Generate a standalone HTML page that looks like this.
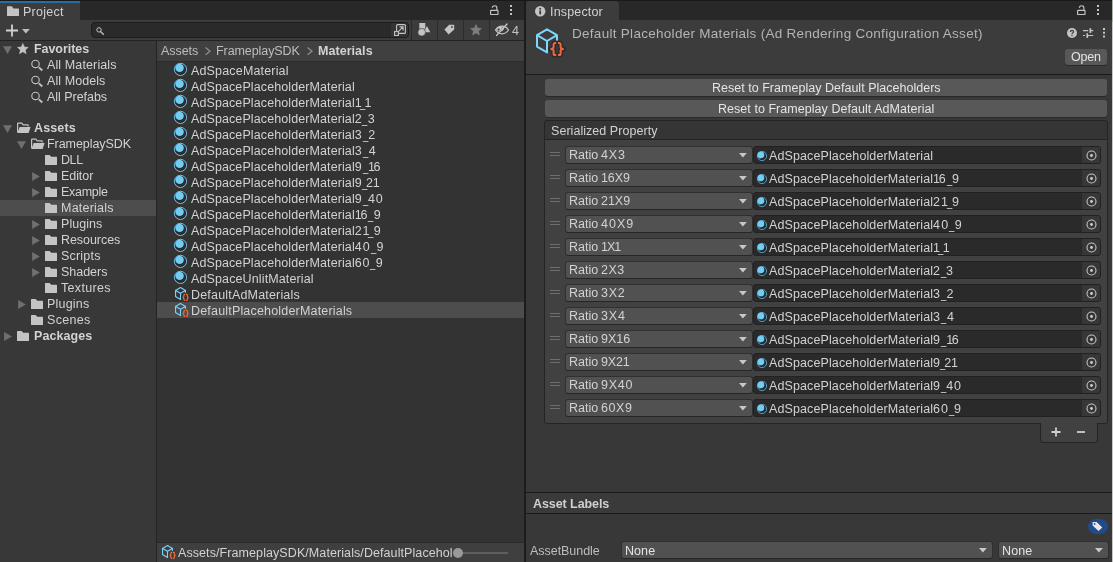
<!DOCTYPE html>
<html><head><meta charset="utf-8"><title>Unity</title>
<style>
*{box-sizing:border-box;margin:0;padding:0}
html,body{width:1113px;height:562px;overflow:hidden;background:#383838}
body{font-family:"Liberation Sans",sans-serif;font-size:12.5px;color:#d2d2d2;position:relative;line-height:16px;letter-spacing:0.06px}
.a{position:absolute}
.t{position:absolute;white-space:pre;height:16px;line-height:16px;will-change:transform}
.b{font-weight:bold}
svg{position:absolute;overflow:visible}
.sel{background:#4d4d4d;height:16px}
.btn{will-change:transform;background:#585858;border-radius:3px;color:#e4e4e4;text-align:center;box-shadow:0 1px 0 #2a2a2a}
.dd{background:#515151;border:1px solid #303030;border-bottom-color:#262626;border-radius:3px;height:18px}
.of{background:#2a2a2a;border:1px solid #212121;border-radius:3px;height:18px}
</style></head><body>
<div class="a" style="left:0px;top:0px;width:524px;height:20px;background:#282828;border-top-right-radius:3px"></div>
<div class="a" style="left:526px;top:0px;width:586px;height:20px;background:#282828;border-top-right-radius:3px"></div>
<div class="a" style="left:0px;top:1px;width:80px;height:19px;background:#3c3c3c;border-top:2px solid #2d6aa3"></div>
<div class="a" style="left:526px;top:1px;width:93px;height:19px;background:#3c3c3c;border-radius:3px 3px 0 0"></div>
<div class="a" style="left:0px;top:20px;width:524px;height:21px;background:#3c3c3c;border-bottom:1px solid #232323"></div>
<div class="a" style="left:0px;top:41px;width:156px;height:521px;background:#383838;"></div>
<div class="a" style="left:156px;top:41px;width:1px;height:521px;background:#232323;"></div>
<div class="a" style="left:157px;top:41px;width:367px;height:21px;background:#404040;border-bottom:1px solid #2e2e2e"></div>
<div class="a" style="left:157px;top:62px;width:367px;height:480px;background:#333333;"></div>
<div class="a" style="left:157px;top:542px;width:367px;height:20px;background:#3f3f3f;border-top:1px solid #2a2a2a"></div>
<div class="a" style="left:524px;top:0px;width:2px;height:562px;background:#1c1c1c;"></div>
<div class="a" style="left:0px;top:0px;width:1113px;height:1px;background:#191919;"></div>
<div class="a" style="left:526px;top:20px;width:586px;height:55px;background:#3c3c3c;border-bottom:1px solid #1a1a1a"></div>
<div class="a" style="left:526px;top:75px;width:586px;height:487px;background:#383838;"></div>
<svg style="left:7px;top:6px" width="13" height="11"><path d="M0 0.8 Q0 0.2 0.6 0.2 H4.8 L6.4 2.4 H11.4 Q12 2.4 12 3 V9.4 Q12 10 11.4 10 H0.6 Q0 10 0 9.4 Z" fill="#c4c4c4"/></svg>
<div class="t" style="left:23.05px;top:4px;;letter-spacing:0.249px">Project</div>
<svg style="left:490px;top:5px" width="9" height="11"><rect x="0.6" y="5.3" width="7.4" height="4.2" rx="0.6" fill="none" stroke="#c4c4c4" stroke-width="1.15"/><path d="M6.9 5.2 V3 Q6.9 0.7 4.6 0.7 Q2.4 0.7 2.3 2.8" fill="none" stroke="#c4c4c4" stroke-width="1.15"/></svg>
<svg style="left:510px;top:5px" width="2" height="12"><rect x="0" y="0" width="2" height="2" fill="#c4c4c4"/><rect x="0" y="4" width="2" height="2" fill="#c4c4c4"/><rect x="0" y="8" width="2" height="2" fill="#c4c4c4"/></svg>
<svg style="left:534.8px;top:5.9px" width="11" height="11"><circle cx="5.2" cy="5.2" r="5.2" fill="#c4c4c4"/><rect x="4.3" y="4.4" width="1.8" height="4" fill="#3c3c3c"/><rect x="4.3" y="1.9" width="1.8" height="1.7" fill="#3c3c3c"/></svg>
<div class="t" style="left:549.75px;top:3.7px;;letter-spacing:0.16px">Inspector</div>
<svg style="left:1077px;top:5px" width="9" height="11"><rect x="0.6" y="5.3" width="7.4" height="4.2" rx="0.6" fill="none" stroke="#c4c4c4" stroke-width="1.15"/><path d="M6.9 5.2 V3 Q6.9 0.7 4.6 0.7 Q2.4 0.7 2.3 2.8" fill="none" stroke="#c4c4c4" stroke-width="1.15"/></svg>
<svg style="left:1097px;top:5px" width="2" height="12"><rect x="0" y="0" width="2" height="2" fill="#c4c4c4"/><rect x="0" y="4" width="2" height="2" fill="#c4c4c4"/><rect x="0" y="8" width="2" height="2" fill="#c4c4c4"/></svg>
<svg style="left:6px;top:24px" width="13" height="13"><path d="M6 0.5 V12.5 M0 6.5 H12" stroke="#d0d0d0" stroke-width="1.8" fill="none"/></svg>
<svg style="left:22px;top:28.5px" width="8" height="5"><path d="M0 0 H7.8 L3.9 4.5 Z" fill="#bdbdbd"/></svg>
<div class="a" style="left:91.3px;top:22px;width:317.7px;height:16px;background:#2a2a2a;border:1px solid #1c1c1c;border-radius:4px"></div>
<div class="a" style="left:391px;top:23px;width:17px;height:14px;background:#343434;border-radius:0 3px 3px 0"></div>
<svg style="left:95.5px;top:26.5px" width="10" height="10"><circle cx="3" cy="2.9" r="2.2" fill="none" stroke="#c4c4c4" stroke-width="1"/><path d="M4.7 4.7 L7.4 7.3" stroke="#c4c4c4" stroke-width="1.25" stroke-linecap="round"/></svg>
<svg style="left:394px;top:24px" width="12" height="12"><rect x="2.6" y="0.6" width="8.8" height="8.8" rx="1" fill="none" stroke="#c4c4c4" stroke-width="1.1"/><rect x="0.6" y="7.6" width="3.8" height="3.8" fill="#343434" stroke="#c4c4c4" stroke-width="1.1"/><path d="M4.6 7.4 L8.8 3.2 M5.6 2.9 H9.1 V6.4" fill="none" stroke="#c4c4c4" stroke-width="1.1"/></svg>
<div class="a" style="left:411px;top:20px;width:1px;height:20px;background:#2b2b2b;"></div>
<div class="a" style="left:437px;top:20px;width:1px;height:20px;background:#2b2b2b;"></div>
<div class="a" style="left:463px;top:20px;width:1px;height:20px;background:#2b2b2b;"></div>
<div class="a" style="left:489px;top:20px;width:1px;height:20px;background:#2b2b2b;"></div>
<svg style="left:418px;top:23px" width="13" height="14"><rect x="1.3" y="0" width="6" height="5.8" fill="#c4c4c4"/><path d="M9 3 L12.3 9.3 H5.7 Z" fill="#c4c4c4"/><circle cx="3.7" cy="9.3" r="3.8" fill="#c4c4c4" stroke="#3c3c3c" stroke-width="0.6"/></svg>
<svg style="left:444px;top:24px" width="11" height="11"><path d="M5.2 0.8 H9.6 Q10.2 0.8 10.2 1.4 V5.6 L4.6 10.6 L0.4 5.6 Z" fill="#c4c4c4"/><circle cx="8" cy="3" r="0.9" fill="#3c3c3c"/></svg>
<svg style="left:470px;top:24px" width="11.96" height="11.96" viewBox="0 0 13 13"><path d="M6.50 0.50 L8.20 4.45 L12.49 4.85 L9.26 7.70 L10.20 11.90 L6.50 9.70 L2.80 11.90 L3.74 7.70 L0.51 4.85 L4.80 4.45 Z" fill="#7e7e7e" stroke="#7e7e7e" stroke-width="0.6" stroke-linejoin="round"/></svg>
<svg style="left:494px;top:23px" width="16" height="14"><path d="M1.5 7 Q4 3.2 8 3.2 Q12 3.2 14.5 7 Q12 10.8 8 10.8 Q4 10.8 1.5 7 Z" fill="none" stroke="#c4c4c4" stroke-width="1.3"/><path d="M2 7 Q4.2 3.6 8 3.6 L9.2 3.8 L5.2 8.6 Q3.2 8.4 2 7 Z" fill="#c4c4c4"/><circle cx="4.6" cy="6.6" r="1.1" fill="#3c3c3c"/><path d="M9.8 5.4 L7.4 8.2" stroke="#c4c4c4" stroke-width="1.3"/><path d="M2.6 12.4 L13 1" stroke="#c4c4c4" stroke-width="1.4" stroke-linecap="round"/></svg>
<div class="t" style="left:511.7px;top:22.5px;color:#c4c4c4">4</div>
<svg style="left:0px;top:41px" width="16" height="16"><path d="M3 5.2 H12 L7.5 13 Z" fill="#6f6f6f"/></svg>
<svg style="left:17.2px;top:43.4px" width="11.700000000000001" height="11.700000000000001" viewBox="0 0 13 13"><path d="M6.50 0.50 L8.20 4.45 L12.49 4.85 L9.26 7.70 L10.20 11.90 L6.50 9.70 L2.80 11.90 L3.74 7.70 L0.51 4.85 L4.80 4.45 Z" fill="#c4c4c4" stroke="#c4c4c4" stroke-width="0.6" stroke-linejoin="round"/></svg>
<div class="t b" style="left:33.75px;top:41px;;letter-spacing:-0.062px">Favorites</div>
<svg style="left:30px;top:58px" width="16" height="16"><circle cx="5.5" cy="5.9" r="3.7" fill="none" stroke="#c4c4c4" stroke-width="1.1"/><path d="M8.9 9.4 L12.3 12.5" stroke="#c4c4c4" stroke-width="1.9"/></svg>
<div class="t" style="left:47.35px;top:57px;;letter-spacing:0.118px">All Materials</div>
<svg style="left:30px;top:74px" width="16" height="16"><circle cx="5.5" cy="5.9" r="3.7" fill="none" stroke="#c4c4c4" stroke-width="1.1"/><path d="M8.9 9.4 L12.3 12.5" stroke="#c4c4c4" stroke-width="1.9"/></svg>
<div class="t" style="left:47.35px;top:73px;;letter-spacing:0.07px">All Models</div>
<svg style="left:30px;top:90px" width="16" height="16"><circle cx="5.5" cy="5.9" r="3.7" fill="none" stroke="#c4c4c4" stroke-width="1.1"/><path d="M8.9 9.4 L12.3 12.5" stroke="#c4c4c4" stroke-width="1.9"/></svg>
<div class="t" style="left:47.35px;top:89px;;letter-spacing:-0.035px">All Prefabs</div>
<svg style="left:0px;top:120px" width="16" height="16"><path d="M3 5.2 H12 L7.5 13 Z" fill="#6f6f6f"/></svg>
<svg style="left:17px;top:120px" width="16" height="16"><path d="M0.6 12.3 V3.8 Q0.6 3.2 1.2 3.2 H4.8 L6.2 4.8 H10.6 Q11.2 4.8 11.2 5.4 V6.6" fill="none" stroke="#c4c4c4" stroke-width="1.2"/><path d="M2.7 7 H13.6 L11.6 13 H0.3 Z" fill="#c4c4c4"/></svg>
<div class="t b" style="left:34.25px;top:120px;;letter-spacing:0.14px">Assets</div>
<svg style="left:14px;top:136px" width="16" height="16"><path d="M3 5.2 H12 L7.5 13 Z" fill="#6f6f6f"/></svg>
<svg style="left:31px;top:136px" width="16" height="16"><path d="M0.6 12.3 V3.8 Q0.6 3.2 1.2 3.2 H4.8 L6.2 4.8 H10.6 Q11.2 4.8 11.2 5.4 V6.6" fill="none" stroke="#c4c4c4" stroke-width="1.2"/><path d="M2.7 7 H13.6 L11.6 13 H0.3 Z" fill="#c4c4c4"/></svg>
<div class="t" style="left:46.85px;top:136px;;letter-spacing:-0.059px">FrameplaySDK</div>
<svg style="left:45px;top:152px" width="16" height="16"><path d="M0 3.6 Q0 3 0.6 3 H4.6 L6.2 4.8 H11.4 Q12 4.8 12 5.4 V12.4 Q12 13 11.4 13 H0.6 Q0 13 0 12.4 Z" fill="#c4c4c4"/></svg>
<div class="t" style="left:60.95px;top:152px;;letter-spacing:-0.419px">DLL</div>
<svg style="left:28px;top:168px" width="16" height="16"><path d="M4.1 4.1 L11.9 8.6 L4.1 13.1 Z" fill="#6f6f6f"/></svg>
<svg style="left:45px;top:168px" width="16" height="16"><path d="M0 3.6 Q0 3 0.6 3 H4.6 L6.2 4.8 H11.4 Q12 4.8 12 5.4 V12.4 Q12 13 11.4 13 H0.6 Q0 13 0 12.4 Z" fill="#c4c4c4"/></svg>
<div class="t" style="left:60.95px;top:168px;;letter-spacing:-0.071px">Editor</div>
<svg style="left:28px;top:184px" width="16" height="16"><path d="M4.1 4.1 L11.9 8.6 L4.1 13.1 Z" fill="#6f6f6f"/></svg>
<svg style="left:45px;top:184px" width="16" height="16"><path d="M0 3.6 Q0 3 0.6 3 H4.6 L6.2 4.8 H11.4 Q12 4.8 12 5.4 V12.4 Q12 13 11.4 13 H0.6 Q0 13 0 12.4 Z" fill="#c4c4c4"/></svg>
<div class="t" style="left:60.95px;top:184px;;letter-spacing:-0.273px">Example</div>
<div class="a" style="left:0px;top:200px;width:156px;height:16px;background:#4d4d4d;"></div>
<svg style="left:45px;top:200px" width="16" height="16"><path d="M0 3.6 Q0 3 0.6 3 H4.6 L6.2 4.8 H11.4 Q12 4.8 12 5.4 V12.4 Q12 13 11.4 13 H0.6 Q0 13 0 12.4 Z" fill="#c4c4c4"/></svg>
<div class="t" style="left:60.95px;top:200px;;letter-spacing:0.223px">Materials</div>
<svg style="left:28px;top:216px" width="16" height="16"><path d="M4.1 4.1 L11.9 8.6 L4.1 13.1 Z" fill="#6f6f6f"/></svg>
<svg style="left:45px;top:216px" width="16" height="16"><path d="M0 3.6 Q0 3 0.6 3 H4.6 L6.2 4.8 H11.4 Q12 4.8 12 5.4 V12.4 Q12 13 11.4 13 H0.6 Q0 13 0 12.4 Z" fill="#c4c4c4"/></svg>
<div class="t" style="left:60.95px;top:216px;;letter-spacing:0.05px">Plugins</div>
<svg style="left:28px;top:232px" width="16" height="16"><path d="M4.1 4.1 L11.9 8.6 L4.1 13.1 Z" fill="#6f6f6f"/></svg>
<svg style="left:45px;top:232px" width="16" height="16"><path d="M0 3.6 Q0 3 0.6 3 H4.6 L6.2 4.8 H11.4 Q12 4.8 12 5.4 V12.4 Q12 13 11.4 13 H0.6 Q0 13 0 12.4 Z" fill="#c4c4c4"/></svg>
<div class="t" style="left:60.95px;top:232px;;letter-spacing:-0.056px">Resources</div>
<svg style="left:28px;top:248px" width="16" height="16"><path d="M4.1 4.1 L11.9 8.6 L4.1 13.1 Z" fill="#6f6f6f"/></svg>
<svg style="left:45px;top:248px" width="16" height="16"><path d="M0 3.6 Q0 3 0.6 3 H4.6 L6.2 4.8 H11.4 Q12 4.8 12 5.4 V12.4 Q12 13 11.4 13 H0.6 Q0 13 0 12.4 Z" fill="#c4c4c4"/></svg>
<div class="t" style="left:60.95px;top:248px;;letter-spacing:0.199px">Scripts</div>
<svg style="left:28px;top:264px" width="16" height="16"><path d="M4.1 4.1 L11.9 8.6 L4.1 13.1 Z" fill="#6f6f6f"/></svg>
<svg style="left:45px;top:264px" width="16" height="16"><path d="M0 3.6 Q0 3 0.6 3 H4.6 L6.2 4.8 H11.4 Q12 4.8 12 5.4 V12.4 Q12 13 11.4 13 H0.6 Q0 13 0 12.4 Z" fill="#c4c4c4"/></svg>
<div class="t" style="left:60.95px;top:264px;;letter-spacing:-0.027px">Shaders</div>
<svg style="left:45px;top:280px" width="16" height="16"><path d="M0 3.6 Q0 3 0.6 3 H4.6 L6.2 4.8 H11.4 Q12 4.8 12 5.4 V12.4 Q12 13 11.4 13 H0.6 Q0 13 0 12.4 Z" fill="#c4c4c4"/></svg>
<div class="t" style="left:60.95px;top:280px;;letter-spacing:0.321px">Textures</div>
<svg style="left:14px;top:296px" width="16" height="16"><path d="M4.1 4.1 L11.9 8.6 L4.1 13.1 Z" fill="#6f6f6f"/></svg>
<svg style="left:31px;top:296px" width="16" height="16"><path d="M0 3.6 Q0 3 0.6 3 H4.6 L6.2 4.8 H11.4 Q12 4.8 12 5.4 V12.4 Q12 13 11.4 13 H0.6 Q0 13 0 12.4 Z" fill="#c4c4c4"/></svg>
<div class="t" style="left:46.65px;top:296px;;letter-spacing:0.2px">Plugins</div>
<svg style="left:31px;top:312px" width="16" height="16"><path d="M0 3.6 Q0 3 0.6 3 H4.6 L6.2 4.8 H11.4 Q12 4.8 12 5.4 V12.4 Q12 13 11.4 13 H0.6 Q0 13 0 12.4 Z" fill="#c4c4c4"/></svg>
<div class="t" style="left:46.65px;top:312px;;letter-spacing:0.299px">Scenes</div>
<svg style="left:0px;top:328px" width="16" height="16"><path d="M4.1 4.1 L11.9 8.6 L4.1 13.1 Z" fill="#6f6f6f"/></svg>
<svg style="left:17px;top:328px" width="16" height="16"><path d="M0 3.6 Q0 3 0.6 3 H4.6 L6.2 4.8 H11.4 Q12 4.8 12 5.4 V12.4 Q12 13 11.4 13 H0.6 Q0 13 0 12.4 Z" fill="#c4c4c4"/></svg>
<div class="t b" style="left:33.75px;top:328px;;letter-spacing:0.059px">Packages</div>
<div class="t" style="left:161.15px;top:42.9px;color:#bdbdbd;letter-spacing:-0.063px">Assets</div>
<svg style="left:205.2px;top:47.3px" width="7" height="9"><path d="M0.6 0.5 L5 4.15 L0.6 7.8" fill="none" stroke="#8c8c8c" stroke-width="1.3"/></svg>
<div class="t" style="left:215.65px;top:42.9px;color:#bdbdbd;letter-spacing:-0.077px">FrameplaySDK</div>
<svg style="left:306.9px;top:47.3px" width="7" height="9"><path d="M0.6 0.5 L5 4.15 L0.6 7.8" fill="none" stroke="#8c8c8c" stroke-width="1.3"/></svg>
<div class="t b" style="left:317.95px;top:42.9px;;letter-spacing:0.05px">Materials</div>
<svg style="left:173px;top:62px" width="16.0" height="16.0" viewBox="0 0 16 16"><circle cx="7.5" cy="7.4" r="6.1" fill="#2b2b2b" stroke="#6fcdf8" stroke-width="0.95"/><circle cx="6.6" cy="5.9" r="4.2" fill="#6fcdf8"/></svg>
<div class="t" style="left:191.35px;top:62.8px;;letter-spacing:0.164px">AdSpaceMaterial</div>
<svg style="left:173px;top:78px" width="16.0" height="16.0" viewBox="0 0 16 16"><circle cx="7.5" cy="7.4" r="6.1" fill="#2b2b2b" stroke="#6fcdf8" stroke-width="0.95"/><circle cx="6.6" cy="5.9" r="4.2" fill="#6fcdf8"/></svg>
<div class="t" style="left:191.35px;top:78.8px;letter-spacing:0.099px">AdSpacePlaceholderMaterial</div>
<svg style="left:173px;top:94px" width="16.0" height="16.0" viewBox="0 0 16 16"><circle cx="7.5" cy="7.4" r="6.1" fill="#2b2b2b" stroke="#6fcdf8" stroke-width="0.95"/><circle cx="6.6" cy="5.9" r="4.2" fill="#6fcdf8"/></svg>
<div class="t" style="left:191.35px;top:94.8px;letter-spacing:0.099px">AdSpacePlaceholderMaterial<span style="letter-spacing:-1.97px">1</span><span style="display:inline-block;width:4.73px;transform:scaleX(0.76);transform-origin:0 50%;letter-spacing:0">_</span><span style="letter-spacing:-1.97px">1</span></div>
<svg style="left:173px;top:110px" width="16.0" height="16.0" viewBox="0 0 16 16"><circle cx="7.5" cy="7.4" r="6.1" fill="#2b2b2b" stroke="#6fcdf8" stroke-width="0.95"/><circle cx="6.6" cy="5.9" r="4.2" fill="#6fcdf8"/></svg>
<div class="t" style="left:191.35px;top:110.8px;letter-spacing:0.099px">AdSpacePlaceholderMaterial<span style="letter-spacing:0.75px">2</span><span style="display:inline-block;width:5.30px;transform:scaleX(0.76);transform-origin:0 50%;letter-spacing:0">_</span><span style="letter-spacing:0.75px">3</span></div>
<svg style="left:173px;top:126px" width="16.0" height="16.0" viewBox="0 0 16 16"><circle cx="7.5" cy="7.4" r="6.1" fill="#2b2b2b" stroke="#6fcdf8" stroke-width="0.95"/><circle cx="6.6" cy="5.9" r="4.2" fill="#6fcdf8"/></svg>
<div class="t" style="left:191.35px;top:126.8px;letter-spacing:0.099px">AdSpacePlaceholderMaterial<span style="letter-spacing:0.92px">3</span><span style="display:inline-block;width:5.47px;transform:scaleX(0.76);transform-origin:0 50%;letter-spacing:0">_</span><span style="letter-spacing:0.92px">2</span></div>
<svg style="left:173px;top:142px" width="16.0" height="16.0" viewBox="0 0 16 16"><circle cx="7.5" cy="7.4" r="6.1" fill="#2b2b2b" stroke="#6fcdf8" stroke-width="0.95"/><circle cx="6.6" cy="5.9" r="4.2" fill="#6fcdf8"/></svg>
<div class="t" style="left:191.35px;top:142.8px;letter-spacing:0.099px">AdSpacePlaceholderMaterial<span style="letter-spacing:1.18px">3</span><span style="display:inline-block;width:5.73px;transform:scaleX(0.76);transform-origin:0 50%;letter-spacing:0">_</span><span style="letter-spacing:1.18px">4</span></div>
<svg style="left:173px;top:158px" width="16.0" height="16.0" viewBox="0 0 16 16"><circle cx="7.5" cy="7.4" r="6.1" fill="#2b2b2b" stroke="#6fcdf8" stroke-width="0.95"/><circle cx="6.6" cy="5.9" r="4.2" fill="#6fcdf8"/></svg>
<div class="t" style="left:191.35px;top:158.8px;letter-spacing:0.099px">AdSpacePlaceholderMaterial<span style="letter-spacing:0.80px">9</span><span style="display:inline-block;width:5.35px;transform:scaleX(0.76);transform-origin:0 50%;letter-spacing:0">_</span><span style="letter-spacing:-1.35px">1</span><span style="letter-spacing:0.80px">6</span></div>
<svg style="left:173px;top:174px" width="16.0" height="16.0" viewBox="0 0 16 16"><circle cx="7.5" cy="7.4" r="6.1" fill="#2b2b2b" stroke="#6fcdf8" stroke-width="0.95"/><circle cx="6.6" cy="5.9" r="4.2" fill="#6fcdf8"/></svg>
<div class="t" style="left:191.35px;top:174.8px;letter-spacing:0.099px">AdSpacePlaceholderMaterial<span style="letter-spacing:-0.15px">9</span><span style="display:inline-block;width:4.40px;transform:scaleX(0.76);transform-origin:0 50%;letter-spacing:0">_</span><span style="letter-spacing:-0.15px">2</span><span style="letter-spacing:-2.30px">1</span></div>
<svg style="left:173px;top:190px" width="16.0" height="16.0" viewBox="0 0 16 16"><circle cx="7.5" cy="7.4" r="6.1" fill="#2b2b2b" stroke="#6fcdf8" stroke-width="0.95"/><circle cx="6.6" cy="5.9" r="4.2" fill="#6fcdf8"/></svg>
<div class="t" style="left:191.35px;top:190.8px;letter-spacing:0.099px">AdSpacePlaceholderMaterial<span style="letter-spacing:0.85px">9</span><span style="display:inline-block;width:5.40px;transform:scaleX(0.76);transform-origin:0 50%;letter-spacing:0">_</span><span style="letter-spacing:0.85px">4</span><span style="letter-spacing:0.85px">0</span></div>
<svg style="left:173px;top:206px" width="16.0" height="16.0" viewBox="0 0 16 16"><circle cx="7.5" cy="7.4" r="6.1" fill="#2b2b2b" stroke="#6fcdf8" stroke-width="0.95"/><circle cx="6.6" cy="5.9" r="4.2" fill="#6fcdf8"/></svg>
<div class="t" style="left:191.35px;top:206.8px;letter-spacing:0.099px">AdSpacePlaceholderMaterial<span style="letter-spacing:-1.28px">1</span><span style="letter-spacing:0.87px">6</span><span style="display:inline-block;width:5.42px;transform:scaleX(0.76);transform-origin:0 50%;letter-spacing:0">_</span><span style="letter-spacing:0.87px">9</span></div>
<svg style="left:173px;top:222px" width="16.0" height="16.0" viewBox="0 0 16 16"><circle cx="7.5" cy="7.4" r="6.1" fill="#2b2b2b" stroke="#6fcdf8" stroke-width="0.95"/><circle cx="6.6" cy="5.9" r="4.2" fill="#6fcdf8"/></svg>
<div class="t" style="left:191.35px;top:222.8px;letter-spacing:0.099px">AdSpacePlaceholderMaterial<span style="letter-spacing:0.87px">2</span><span style="letter-spacing:-1.28px">1</span><span style="display:inline-block;width:5.42px;transform:scaleX(0.76);transform-origin:0 50%;letter-spacing:0">_</span><span style="letter-spacing:0.87px">9</span></div>
<svg style="left:173px;top:238px" width="16.0" height="16.0" viewBox="0 0 16 16"><circle cx="7.5" cy="7.4" r="6.1" fill="#2b2b2b" stroke="#6fcdf8" stroke-width="0.95"/><circle cx="6.6" cy="5.9" r="4.2" fill="#6fcdf8"/></svg>
<div class="t" style="left:191.35px;top:238.8px;letter-spacing:0.099px">AdSpacePlaceholderMaterial<span style="letter-spacing:1.07px">4</span><span style="letter-spacing:1.07px">0</span><span style="display:inline-block;width:5.62px;transform:scaleX(0.76);transform-origin:0 50%;letter-spacing:0">_</span><span style="letter-spacing:1.07px">9</span></div>
<svg style="left:173px;top:254px" width="16.0" height="16.0" viewBox="0 0 16 16"><circle cx="7.5" cy="7.4" r="6.1" fill="#2b2b2b" stroke="#6fcdf8" stroke-width="0.95"/><circle cx="6.6" cy="5.9" r="4.2" fill="#6fcdf8"/></svg>
<div class="t" style="left:191.35px;top:254.8px;letter-spacing:0.099px">AdSpacePlaceholderMaterial<span style="letter-spacing:0.85px">6</span><span style="letter-spacing:0.85px">0</span><span style="display:inline-block;width:5.40px;transform:scaleX(0.76);transform-origin:0 50%;letter-spacing:0">_</span><span style="letter-spacing:0.85px">9</span></div>
<svg style="left:173px;top:270px" width="16.0" height="16.0" viewBox="0 0 16 16"><circle cx="7.5" cy="7.4" r="6.1" fill="#2b2b2b" stroke="#6fcdf8" stroke-width="0.95"/><circle cx="6.6" cy="5.9" r="4.2" fill="#6fcdf8"/></svg>
<div class="t" style="left:191.35px;top:270.8px;;letter-spacing:0.126px">AdSpaceUnlitMaterial</div>
<svg style="left:173px;top:286px" width="17" height="16" viewBox="0 0 17 16"><path d="M7.5 1.55 L2.55 4.4 V10.6 L7.5 13.45 V7.27 L2.55 4.4 M7.5 7.27 L12.45 4.4 L7.5 1.55 M12.45 4.4 V7.6" fill="none" stroke="#79d3fb" stroke-width="1.1" stroke-linejoin="round" stroke-linecap="round"/><path d="M12.3 8.35 H11.8 Q10.9 8.35 10.9 9.2 V10.4 Q10.9 11.4 9.6 11.4 Q10.9 11.4 10.9 12.4 V13.6 Q10.9 14.45 11.8 14.45 H12.3 M13 8.35 H13.5 Q14.4 8.35 14.4 9.2 V10.4 Q14.4 11.4 15.7 11.4 Q14.4 11.4 14.4 12.4 V13.6 Q14.4 14.45 13.5 14.45 H13" fill="none" stroke="#333333" stroke-width="3" stroke-linejoin="round" stroke-linecap="round"/><path d="M12.3 8.35 H11.8 Q10.9 8.35 10.9 9.2 V10.4 Q10.9 11.4 9.6 11.4 Q10.9 11.4 10.9 12.4 V13.6 Q10.9 14.45 11.8 14.45 H12.3 M13 8.35 H13.5 Q14.4 8.35 14.4 9.2 V10.4 Q14.4 11.4 15.7 11.4 Q14.4 11.4 14.4 12.4 V13.6 Q14.4 14.45 13.5 14.45 H13" fill="none" stroke="#f2683c" stroke-width="1.2"/></svg>
<div class="t" style="left:190.65px;top:286.8px;;letter-spacing:0.182px">DefaultAdMaterials</div>
<div class="a" style="left:157px;top:302px;width:367px;height:16px;background:#4d4d4d;"></div>
<svg style="left:173px;top:302px" width="17" height="16" viewBox="0 0 17 16"><path d="M7.5 1.55 L2.55 4.4 V10.6 L7.5 13.45 V7.27 L2.55 4.4 M7.5 7.27 L12.45 4.4 L7.5 1.55 M12.45 4.4 V7.6" fill="none" stroke="#79d3fb" stroke-width="1.1" stroke-linejoin="round" stroke-linecap="round"/><path d="M12.3 8.35 H11.8 Q10.9 8.35 10.9 9.2 V10.4 Q10.9 11.4 9.6 11.4 Q10.9 11.4 10.9 12.4 V13.6 Q10.9 14.45 11.8 14.45 H12.3 M13 8.35 H13.5 Q14.4 8.35 14.4 9.2 V10.4 Q14.4 11.4 15.7 11.4 Q14.4 11.4 14.4 12.4 V13.6 Q14.4 14.45 13.5 14.45 H13" fill="none" stroke="#4d4d4d" stroke-width="3" stroke-linejoin="round" stroke-linecap="round"/><path d="M12.3 8.35 H11.8 Q10.9 8.35 10.9 9.2 V10.4 Q10.9 11.4 9.6 11.4 Q10.9 11.4 10.9 12.4 V13.6 Q10.9 14.45 11.8 14.45 H12.3 M13 8.35 H13.5 Q14.4 8.35 14.4 9.2 V10.4 Q14.4 11.4 15.7 11.4 Q14.4 11.4 14.4 12.4 V13.6 Q14.4 14.45 13.5 14.45 H13" fill="none" stroke="#f2683c" stroke-width="1.2"/></svg>
<div class="t" style="left:190.65px;top:302.8px;;letter-spacing:0.183px">DefaultPlaceholderMaterials</div>
<svg style="left:159.6px;top:544.4px" width="17" height="16" viewBox="0 0 17 16"><path d="M7.5 1.55 L2.55 4.4 V10.6 L7.5 13.45 V7.27 L2.55 4.4 M7.5 7.27 L12.45 4.4 L7.5 1.55 M12.45 4.4 V7.6" fill="none" stroke="#79d3fb" stroke-width="1.1" stroke-linejoin="round" stroke-linecap="round"/><path d="M12.3 8.35 H11.8 Q10.9 8.35 10.9 9.2 V10.4 Q10.9 11.4 9.6 11.4 Q10.9 11.4 10.9 12.4 V13.6 Q10.9 14.45 11.8 14.45 H12.3 M13 8.35 H13.5 Q14.4 8.35 14.4 9.2 V10.4 Q14.4 11.4 15.7 11.4 Q14.4 11.4 14.4 12.4 V13.6 Q14.4 14.45 13.5 14.45 H13" fill="none" stroke="#3f3f3f" stroke-width="3" stroke-linejoin="round" stroke-linecap="round"/><path d="M12.3 8.35 H11.8 Q10.9 8.35 10.9 9.2 V10.4 Q10.9 11.4 9.6 11.4 Q10.9 11.4 10.9 12.4 V13.6 Q10.9 14.45 11.8 14.45 H12.3 M13 8.35 H13.5 Q14.4 8.35 14.4 9.2 V10.4 Q14.4 11.4 15.7 11.4 Q14.4 11.4 14.4 12.4 V13.6 Q14.4 14.45 13.5 14.45 H13" fill="none" stroke="#f2683c" stroke-width="1.2"/></svg>
<div class="t" style="left:178.05px;top:545px;;letter-spacing:0.083px">Assets/FrameplaySDK/Materials/DefaultPlacehol</div>
<div class="a" style="left:460px;top:552px;width:48px;height:2px;background:#5e5e5e;"></div>
<div class="a" style="left:453.2px;top:548px;width:10px;height:10px;background:#999999;border-radius:5px"></div>
<svg style="left:0;top:0" width="600" height="60" viewBox="0 0 600 60"><path d="M547 29.4 L537 35.2 V46.6 L547 52.4 V41 L537 35.2 M547 41 L557 35.2 L547 29.4 M557 35.2 V42" fill="none" stroke="#7fd6fd" stroke-width="2" stroke-linejoin="round" stroke-linecap="round"/><path d="M556.2 43 H555 Q553.6 43 553.6 44.5 V47 Q553.6 48.9 550.5 48.9 Q553.6 48.9 553.6 50.8 V53.4 Q553.6 55 555 55 H556.2 M558 43 H559.2 Q560.6 43 560.6 44.5 V47 Q560.6 48.9 563.7 48.9 Q560.6 48.9 560.6 50.8 V53.4 Q560.6 55 559.2 55 H558" fill="none" stroke="#2d2d2d" stroke-width="5" stroke-linejoin="round" stroke-linecap="round"/><path d="M556.2 43 H555 Q553.6 43 553.6 44.5 V47 Q553.6 48.9 550.5 48.9 Q553.6 48.9 553.6 50.8 V53.4 Q553.6 55 555 55 H556.2 M558 43 H559.2 Q560.6 43 560.6 44.5 V47 Q560.6 48.9 563.7 48.9 Q560.6 48.9 560.6 50.8 V53.4 Q560.6 55 559.2 55 H558" fill="none" stroke="#f2683c" stroke-width="2"/></svg>
<div class="t" style="left:571.85px;top:25.7px;font-size:13.5px;color:#b4b4b4;letter-spacing:0.286px">Default Placeholder Materials (Ad Rendering Configuration Asset)</div>
<svg style="left:1067px;top:28px" width="10" height="10"><circle cx="5" cy="5" r="5" fill="#c4c4c4"/><path d="M3.4 3.9 Q3.4 2.3 5 2.3 Q6.6 2.3 6.6 3.7 Q6.6 4.6 5.7 5 Q5 5.4 5 6.2" fill="none" stroke="#3c3c3c" stroke-width="1.2"/><rect x="4.4" y="7" width="1.2" height="1.2" fill="#3c3c3c"/></svg>
<svg style="left:1083px;top:28px" width="11" height="10"><path d="M0 2.6 H5.2 M8 2.6 H10.2 M0 7.5 H2 M5 7.5 H10.2" stroke="#c4c4c4" stroke-width="1.1"/><rect x="6.5" y="0.2" width="1.7" height="4.8" fill="#c4c4c4"/><rect x="3.4" y="5.2" width="1.7" height="4.7" fill="#c4c4c4"/></svg>
<svg style="left:1103px;top:28px" width="2" height="12"><rect x="0" y="0" width="2" height="2" fill="#c4c4c4"/><rect x="0" y="3.75" width="2" height="2" fill="#c4c4c4"/><rect x="0" y="7.5" width="2" height="2" fill="#c4c4c4"/></svg>
<div class="a btn" style="left:1065px;top:49px;width:42px;height:16px"></div>
<div class="t" style="left:1070.85px;top:48.6px;color:#e4e4e4;letter-spacing:-0.198px">Open</div>
<div class="a btn" style="left:545px;top:79px;width:562px;height:17px"></div>
<div class="t" style="left:711.85px;top:79.5px;color:#e4e4e4;letter-spacing:0.019px">Reset to Frameplay Default Placeholders</div>
<div class="a btn" style="left:545px;top:100px;width:562px;height:17px"></div>
<div class="t" style="left:717.85px;top:100.5px;color:#e4e4e4;letter-spacing:0.045px">Reset to Frameplay Default AdMaterial</div>
<div class="a" style="left:544px;top:120px;width:564px;height:20px;background:#353535;border:1px solid #242424;border-radius:3px 3px 0 0"></div>
<div class="a" style="left:544px;top:139px;width:564px;height:285px;background:#414141;border:1px solid #242424;border-radius:0 0 3px 3px"></div>
<div class="t" style="left:550.85px;top:123.3px;;letter-spacing:0.044px">Serialized Property</div>
<div class="a" style="left:550px;top:152px;width:10px;height:1px;background:#6e6e6e;"></div>
<div class="a" style="left:550px;top:155px;width:10px;height:1px;background:#6e6e6e;"></div>
<div class="a dd" style="left:565px;top:146px;width:188px"></div>
<div class="t" style="left:568.65px;top:147px;;letter-spacing:0.028px">Ratio</div>
<div class="t" style="left:600.55px;top:147px;;letter-spacing:0.85px">4X3</div>
<svg style="left:739.2px;top:152.9px" width="8" height="5"><path d="M0 0 H7.8 L3.9 4.5 Z" fill="#c8c8c8"/></svg>
<div class="a of" style="left:753px;top:146px;width:348px"></div>
<div class="a" style="left:1082px;top:147px;width:18px;height:16px;background:#373737;border-radius:0 2px 2px 0"></div>
<svg style="left:755.8px;top:149.8px" width="12" height="12"><circle cx="6" cy="6" r="4.6" fill="#2a2a2a" stroke="#57a6cf" stroke-width="0.9"/><circle cx="4.9" cy="4.9" r="3.4" fill="#6fcdf8"/></svg>
<div class="t" style="left:769.15px;top:147.5px;letter-spacing:0.111px">AdSpacePlaceholderMaterial</div>
<svg style="left:1085.5px;top:149.5px" width="11" height="11"><circle cx="5.5" cy="5.5" r="4.5" fill="none" stroke="#c4c4c4" stroke-width="1.1"/><circle cx="5.5" cy="5.5" r="1.4" fill="#d0d0d0"/></svg>
<div class="a" style="left:550px;top:175px;width:10px;height:1px;background:#6e6e6e;"></div>
<div class="a" style="left:550px;top:178px;width:10px;height:1px;background:#6e6e6e;"></div>
<div class="a dd" style="left:565px;top:169px;width:188px"></div>
<div class="t" style="left:568.65px;top:170px;;letter-spacing:0.028px">Ratio</div>
<div class="t" style="left:600.7px;top:170px;;letter-spacing:-0.084px">16X9</div>
<svg style="left:739.2px;top:175.9px" width="8" height="5"><path d="M0 0 H7.8 L3.9 4.5 Z" fill="#c8c8c8"/></svg>
<div class="a of" style="left:753px;top:169px;width:348px"></div>
<div class="a" style="left:1082px;top:170px;width:18px;height:16px;background:#373737;border-radius:0 2px 2px 0"></div>
<svg style="left:755.8px;top:172.8px" width="12" height="12"><circle cx="6" cy="6" r="4.6" fill="#2a2a2a" stroke="#57a6cf" stroke-width="0.9"/><circle cx="4.9" cy="4.9" r="3.4" fill="#6fcdf8"/></svg>
<div class="t" style="left:769.15px;top:170.5px;letter-spacing:0.111px">AdSpacePlaceholderMaterial<span style="letter-spacing:-1.26px">1</span><span style="letter-spacing:0.89px">6</span><span style="display:inline-block;width:5.42px;transform:scaleX(0.76);transform-origin:0 50%;letter-spacing:0">_</span><span style="letter-spacing:0.89px">9</span></div>
<svg style="left:1085.5px;top:172.5px" width="11" height="11"><circle cx="5.5" cy="5.5" r="4.5" fill="none" stroke="#c4c4c4" stroke-width="1.1"/><circle cx="5.5" cy="5.5" r="1.4" fill="#d0d0d0"/></svg>
<div class="a" style="left:550px;top:198px;width:10px;height:1px;background:#6e6e6e;"></div>
<div class="a" style="left:550px;top:201px;width:10px;height:1px;background:#6e6e6e;"></div>
<div class="a dd" style="left:565px;top:192px;width:188px"></div>
<div class="t" style="left:568.65px;top:193px;;letter-spacing:0.028px">Ratio</div>
<div class="t" style="left:600.55px;top:193px;;letter-spacing:-0.034px">21X9</div>
<svg style="left:739.2px;top:198.9px" width="8" height="5"><path d="M0 0 H7.8 L3.9 4.5 Z" fill="#c8c8c8"/></svg>
<div class="a of" style="left:753px;top:192px;width:348px"></div>
<div class="a" style="left:1082px;top:193px;width:18px;height:16px;background:#373737;border-radius:0 2px 2px 0"></div>
<svg style="left:755.8px;top:195.8px" width="12" height="12"><circle cx="6" cy="6" r="4.6" fill="#2a2a2a" stroke="#57a6cf" stroke-width="0.9"/><circle cx="4.9" cy="4.9" r="3.4" fill="#6fcdf8"/></svg>
<div class="t" style="left:769.15px;top:193.5px;letter-spacing:0.111px">AdSpacePlaceholderMaterial<span style="letter-spacing:0.89px">2</span><span style="letter-spacing:-1.26px">1</span><span style="display:inline-block;width:5.42px;transform:scaleX(0.76);transform-origin:0 50%;letter-spacing:0">_</span><span style="letter-spacing:0.89px">9</span></div>
<svg style="left:1085.5px;top:195.5px" width="11" height="11"><circle cx="5.5" cy="5.5" r="4.5" fill="none" stroke="#c4c4c4" stroke-width="1.1"/><circle cx="5.5" cy="5.5" r="1.4" fill="#d0d0d0"/></svg>
<div class="a" style="left:550px;top:221px;width:10px;height:1px;background:#6e6e6e;"></div>
<div class="a" style="left:550px;top:224px;width:10px;height:1px;background:#6e6e6e;"></div>
<div class="a dd" style="left:565px;top:215px;width:188px"></div>
<div class="t" style="left:568.65px;top:216px;;letter-spacing:0.028px">Ratio</div>
<div class="t" style="left:600.55px;top:216px;;letter-spacing:0.999px">40X9</div>
<svg style="left:739.2px;top:221.9px" width="8" height="5"><path d="M0 0 H7.8 L3.9 4.5 Z" fill="#c8c8c8"/></svg>
<div class="a of" style="left:753px;top:215px;width:348px"></div>
<div class="a" style="left:1082px;top:216px;width:18px;height:16px;background:#373737;border-radius:0 2px 2px 0"></div>
<svg style="left:755.8px;top:218.8px" width="12" height="12"><circle cx="6" cy="6" r="4.6" fill="#2a2a2a" stroke="#57a6cf" stroke-width="0.9"/><circle cx="4.9" cy="4.9" r="3.4" fill="#6fcdf8"/></svg>
<div class="t" style="left:769.15px;top:216.5px;letter-spacing:0.111px">AdSpacePlaceholderMaterial<span style="letter-spacing:1.09px">4</span><span style="letter-spacing:1.09px">0</span><span style="display:inline-block;width:5.62px;transform:scaleX(0.76);transform-origin:0 50%;letter-spacing:0">_</span><span style="letter-spacing:1.09px">9</span></div>
<svg style="left:1085.5px;top:218.5px" width="11" height="11"><circle cx="5.5" cy="5.5" r="4.5" fill="none" stroke="#c4c4c4" stroke-width="1.1"/><circle cx="5.5" cy="5.5" r="1.4" fill="#d0d0d0"/></svg>
<div class="a" style="left:550px;top:244px;width:10px;height:1px;background:#6e6e6e;"></div>
<div class="a" style="left:550px;top:247px;width:10px;height:1px;background:#6e6e6e;"></div>
<div class="a dd" style="left:565px;top:238px;width:188px"></div>
<div class="t" style="left:568.65px;top:239px;;letter-spacing:0.028px">Ratio</div>
<div class="t" style="left:600.7px;top:239px;;letter-spacing:-0.975px">1X1</div>
<svg style="left:739.2px;top:244.9px" width="8" height="5"><path d="M0 0 H7.8 L3.9 4.5 Z" fill="#c8c8c8"/></svg>
<div class="a of" style="left:753px;top:238px;width:348px"></div>
<div class="a" style="left:1082px;top:239px;width:18px;height:16px;background:#373737;border-radius:0 2px 2px 0"></div>
<svg style="left:755.8px;top:241.8px" width="12" height="12"><circle cx="6" cy="6" r="4.6" fill="#2a2a2a" stroke="#57a6cf" stroke-width="0.9"/><circle cx="4.9" cy="4.9" r="3.4" fill="#6fcdf8"/></svg>
<div class="t" style="left:769.15px;top:239.5px;letter-spacing:0.111px">AdSpacePlaceholderMaterial<span style="letter-spacing:-1.96px">1</span><span style="display:inline-block;width:4.73px;transform:scaleX(0.76);transform-origin:0 50%;letter-spacing:0">_</span><span style="letter-spacing:-1.96px">1</span></div>
<svg style="left:1085.5px;top:241.5px" width="11" height="11"><circle cx="5.5" cy="5.5" r="4.5" fill="none" stroke="#c4c4c4" stroke-width="1.1"/><circle cx="5.5" cy="5.5" r="1.4" fill="#d0d0d0"/></svg>
<div class="a" style="left:550px;top:267px;width:10px;height:1px;background:#6e6e6e;"></div>
<div class="a" style="left:550px;top:270px;width:10px;height:1px;background:#6e6e6e;"></div>
<div class="a dd" style="left:565px;top:261px;width:188px"></div>
<div class="t" style="left:568.65px;top:262px;;letter-spacing:0.028px">Ratio</div>
<div class="t" style="left:600.55px;top:262px;;letter-spacing:0.475px">2X3</div>
<svg style="left:739.2px;top:267.9px" width="8" height="5"><path d="M0 0 H7.8 L3.9 4.5 Z" fill="#c8c8c8"/></svg>
<div class="a of" style="left:753px;top:261px;width:348px"></div>
<div class="a" style="left:1082px;top:262px;width:18px;height:16px;background:#373737;border-radius:0 2px 2px 0"></div>
<svg style="left:755.8px;top:264.8px" width="12" height="12"><circle cx="6" cy="6" r="4.6" fill="#2a2a2a" stroke="#57a6cf" stroke-width="0.9"/><circle cx="4.9" cy="4.9" r="3.4" fill="#6fcdf8"/></svg>
<div class="t" style="left:769.15px;top:262.5px;letter-spacing:0.111px">AdSpacePlaceholderMaterial<span style="letter-spacing:0.76px">2</span><span style="display:inline-block;width:5.30px;transform:scaleX(0.76);transform-origin:0 50%;letter-spacing:0">_</span><span style="letter-spacing:0.76px">3</span></div>
<svg style="left:1085.5px;top:264.5px" width="11" height="11"><circle cx="5.5" cy="5.5" r="4.5" fill="none" stroke="#c4c4c4" stroke-width="1.1"/><circle cx="5.5" cy="5.5" r="1.4" fill="#d0d0d0"/></svg>
<div class="a" style="left:550px;top:290px;width:10px;height:1px;background:#6e6e6e;"></div>
<div class="a" style="left:550px;top:293px;width:10px;height:1px;background:#6e6e6e;"></div>
<div class="a dd" style="left:565px;top:284px;width:188px"></div>
<div class="t" style="left:568.65px;top:285px;;letter-spacing:0.028px">Ratio</div>
<div class="t" style="left:600.55px;top:285px;;letter-spacing:0.725px">3X2</div>
<svg style="left:739.2px;top:290.9px" width="8" height="5"><path d="M0 0 H7.8 L3.9 4.5 Z" fill="#c8c8c8"/></svg>
<div class="a of" style="left:753px;top:284px;width:348px"></div>
<div class="a" style="left:1082px;top:285px;width:18px;height:16px;background:#373737;border-radius:0 2px 2px 0"></div>
<svg style="left:755.8px;top:287.8px" width="12" height="12"><circle cx="6" cy="6" r="4.6" fill="#2a2a2a" stroke="#57a6cf" stroke-width="0.9"/><circle cx="4.9" cy="4.9" r="3.4" fill="#6fcdf8"/></svg>
<div class="t" style="left:769.15px;top:285.5px;letter-spacing:0.111px">AdSpacePlaceholderMaterial<span style="letter-spacing:0.93px">3</span><span style="display:inline-block;width:5.47px;transform:scaleX(0.76);transform-origin:0 50%;letter-spacing:0">_</span><span style="letter-spacing:0.93px">2</span></div>
<svg style="left:1085.5px;top:287.5px" width="11" height="11"><circle cx="5.5" cy="5.5" r="4.5" fill="none" stroke="#c4c4c4" stroke-width="1.1"/><circle cx="5.5" cy="5.5" r="1.4" fill="#d0d0d0"/></svg>
<div class="a" style="left:550px;top:313px;width:10px;height:1px;background:#6e6e6e;"></div>
<div class="a" style="left:550px;top:316px;width:10px;height:1px;background:#6e6e6e;"></div>
<div class="a dd" style="left:565px;top:307px;width:188px"></div>
<div class="t" style="left:568.65px;top:308px;;letter-spacing:0.028px">Ratio</div>
<div class="t" style="left:600.55px;top:308px;;letter-spacing:0.85px">3X4</div>
<svg style="left:739.2px;top:313.9px" width="8" height="5"><path d="M0 0 H7.8 L3.9 4.5 Z" fill="#c8c8c8"/></svg>
<div class="a of" style="left:753px;top:307px;width:348px"></div>
<div class="a" style="left:1082px;top:308px;width:18px;height:16px;background:#373737;border-radius:0 2px 2px 0"></div>
<svg style="left:755.8px;top:310.8px" width="12" height="12"><circle cx="6" cy="6" r="4.6" fill="#2a2a2a" stroke="#57a6cf" stroke-width="0.9"/><circle cx="4.9" cy="4.9" r="3.4" fill="#6fcdf8"/></svg>
<div class="t" style="left:769.15px;top:308.5px;letter-spacing:0.111px">AdSpacePlaceholderMaterial<span style="letter-spacing:1.19px">3</span><span style="display:inline-block;width:5.73px;transform:scaleX(0.76);transform-origin:0 50%;letter-spacing:0">_</span><span style="letter-spacing:1.19px">4</span></div>
<svg style="left:1085.5px;top:310.5px" width="11" height="11"><circle cx="5.5" cy="5.5" r="4.5" fill="none" stroke="#c4c4c4" stroke-width="1.1"/><circle cx="5.5" cy="5.5" r="1.4" fill="#d0d0d0"/></svg>
<div class="a" style="left:550px;top:336px;width:10px;height:1px;background:#6e6e6e;"></div>
<div class="a" style="left:550px;top:339px;width:10px;height:1px;background:#6e6e6e;"></div>
<div class="a dd" style="left:565px;top:330px;width:188px"></div>
<div class="t" style="left:568.65px;top:331px;;letter-spacing:0.028px">Ratio</div>
<div class="t" style="left:600.55px;top:331px;;letter-spacing:-0.034px">9X16</div>
<svg style="left:739.2px;top:336.9px" width="8" height="5"><path d="M0 0 H7.8 L3.9 4.5 Z" fill="#c8c8c8"/></svg>
<div class="a of" style="left:753px;top:330px;width:348px"></div>
<div class="a" style="left:1082px;top:331px;width:18px;height:16px;background:#373737;border-radius:0 2px 2px 0"></div>
<svg style="left:755.8px;top:333.8px" width="12" height="12"><circle cx="6" cy="6" r="4.6" fill="#2a2a2a" stroke="#57a6cf" stroke-width="0.9"/><circle cx="4.9" cy="4.9" r="3.4" fill="#6fcdf8"/></svg>
<div class="t" style="left:769.15px;top:331.5px;letter-spacing:0.111px">AdSpacePlaceholderMaterial<span style="letter-spacing:0.81px">9</span><span style="display:inline-block;width:5.35px;transform:scaleX(0.76);transform-origin:0 50%;letter-spacing:0">_</span><span style="letter-spacing:-1.34px">1</span><span style="letter-spacing:0.81px">6</span></div>
<svg style="left:1085.5px;top:333.5px" width="11" height="11"><circle cx="5.5" cy="5.5" r="4.5" fill="none" stroke="#c4c4c4" stroke-width="1.1"/><circle cx="5.5" cy="5.5" r="1.4" fill="#d0d0d0"/></svg>
<div class="a" style="left:550px;top:359px;width:10px;height:1px;background:#6e6e6e;"></div>
<div class="a" style="left:550px;top:362px;width:10px;height:1px;background:#6e6e6e;"></div>
<div class="a dd" style="left:565px;top:353px;width:188px"></div>
<div class="t" style="left:568.65px;top:354px;;letter-spacing:0.028px">Ratio</div>
<div class="t" style="left:600.55px;top:354px;;letter-spacing:-0.184px">9X21</div>
<svg style="left:739.2px;top:359.9px" width="8" height="5"><path d="M0 0 H7.8 L3.9 4.5 Z" fill="#c8c8c8"/></svg>
<div class="a of" style="left:753px;top:353px;width:348px"></div>
<div class="a" style="left:1082px;top:354px;width:18px;height:16px;background:#373737;border-radius:0 2px 2px 0"></div>
<svg style="left:755.8px;top:356.8px" width="12" height="12"><circle cx="6" cy="6" r="4.6" fill="#2a2a2a" stroke="#57a6cf" stroke-width="0.9"/><circle cx="4.9" cy="4.9" r="3.4" fill="#6fcdf8"/></svg>
<div class="t" style="left:769.15px;top:354.5px;letter-spacing:0.111px">AdSpacePlaceholderMaterial<span style="letter-spacing:-0.14px">9</span><span style="display:inline-block;width:4.40px;transform:scaleX(0.76);transform-origin:0 50%;letter-spacing:0">_</span><span style="letter-spacing:-0.14px">2</span><span style="letter-spacing:-2.29px">1</span></div>
<svg style="left:1085.5px;top:356.5px" width="11" height="11"><circle cx="5.5" cy="5.5" r="4.5" fill="none" stroke="#c4c4c4" stroke-width="1.1"/><circle cx="5.5" cy="5.5" r="1.4" fill="#d0d0d0"/></svg>
<div class="a" style="left:550px;top:382px;width:10px;height:1px;background:#6e6e6e;"></div>
<div class="a" style="left:550px;top:385px;width:10px;height:1px;background:#6e6e6e;"></div>
<div class="a dd" style="left:565px;top:376px;width:188px"></div>
<div class="t" style="left:568.65px;top:377px;;letter-spacing:0.028px">Ratio</div>
<div class="t" style="left:600.55px;top:377px;;letter-spacing:0.732px">9X40</div>
<svg style="left:739.2px;top:382.9px" width="8" height="5"><path d="M0 0 H7.8 L3.9 4.5 Z" fill="#c8c8c8"/></svg>
<div class="a of" style="left:753px;top:376px;width:348px"></div>
<div class="a" style="left:1082px;top:377px;width:18px;height:16px;background:#373737;border-radius:0 2px 2px 0"></div>
<svg style="left:755.8px;top:379.8px" width="12" height="12"><circle cx="6" cy="6" r="4.6" fill="#2a2a2a" stroke="#57a6cf" stroke-width="0.9"/><circle cx="4.9" cy="4.9" r="3.4" fill="#6fcdf8"/></svg>
<div class="t" style="left:769.15px;top:377.5px;letter-spacing:0.111px">AdSpacePlaceholderMaterial<span style="letter-spacing:0.86px">9</span><span style="display:inline-block;width:5.40px;transform:scaleX(0.76);transform-origin:0 50%;letter-spacing:0">_</span><span style="letter-spacing:0.86px">4</span><span style="letter-spacing:0.86px">0</span></div>
<svg style="left:1085.5px;top:379.5px" width="11" height="11"><circle cx="5.5" cy="5.5" r="4.5" fill="none" stroke="#c4c4c4" stroke-width="1.1"/><circle cx="5.5" cy="5.5" r="1.4" fill="#d0d0d0"/></svg>
<div class="a" style="left:550px;top:405px;width:10px;height:1px;background:#6e6e6e;"></div>
<div class="a" style="left:550px;top:408px;width:10px;height:1px;background:#6e6e6e;"></div>
<div class="a dd" style="left:565px;top:399px;width:188px"></div>
<div class="t" style="left:568.65px;top:400px;;letter-spacing:0.028px">Ratio</div>
<div class="t" style="left:600.55px;top:400px;;letter-spacing:0.566px">60X9</div>
<svg style="left:739.2px;top:405.9px" width="8" height="5"><path d="M0 0 H7.8 L3.9 4.5 Z" fill="#c8c8c8"/></svg>
<div class="a of" style="left:753px;top:399px;width:348px"></div>
<div class="a" style="left:1082px;top:400px;width:18px;height:16px;background:#373737;border-radius:0 2px 2px 0"></div>
<svg style="left:755.8px;top:402.8px" width="12" height="12"><circle cx="6" cy="6" r="4.6" fill="#2a2a2a" stroke="#57a6cf" stroke-width="0.9"/><circle cx="4.9" cy="4.9" r="3.4" fill="#6fcdf8"/></svg>
<div class="t" style="left:769.15px;top:400.5px;letter-spacing:0.111px">AdSpacePlaceholderMaterial<span style="letter-spacing:0.86px">6</span><span style="letter-spacing:0.86px">0</span><span style="display:inline-block;width:5.40px;transform:scaleX(0.76);transform-origin:0 50%;letter-spacing:0">_</span><span style="letter-spacing:0.86px">9</span></div>
<svg style="left:1085.5px;top:402.5px" width="11" height="11"><circle cx="5.5" cy="5.5" r="4.5" fill="none" stroke="#c4c4c4" stroke-width="1.1"/><circle cx="5.5" cy="5.5" r="1.4" fill="#d0d0d0"/></svg>
<div class="a" style="left:1040px;top:423px;width:58px;height:20px;background:#414141;border:1px solid #242424;border-top:none;border-radius:0 0 4px 4px"></div>
<svg style="left:1051px;top:427px" width="10" height="10"><path d="M5 0.5 V9.5 M0.5 5 H9.5" stroke="#d0d0d0" stroke-width="1.8"/></svg>
<svg style="left:1076px;top:427px" width="10" height="10"><path d="M1 5 H9" stroke="#d0d0d0" stroke-width="1.8"/></svg>
<div class="a" style="left:526px;top:492px;width:586px;height:22px;background:#3a3a3a;border-top:1px solid #1a1a1a;border-bottom:1px solid #1a1a1a"></div>
<div class="t b" style="left:533.45px;top:496.2px;color:#cfcfcf;letter-spacing:-0.075px">Asset Labels</div>
<svg style="left:1088px;top:519px" width="20" height="15"><rect x="0" y="0" width="20" height="15" rx="8.5" ry="7.5" fill="#214b8a"/><path d="M4.6 2.9 H8.6 L14.3 8.4 L10.5 12 L4.6 6.6 Z" fill="#e8e8e8"/><circle cx="6.6" cy="4.9" r="0.9" fill="#214b8a"/></svg>
<div class="t" style="left:530.45px;top:543px;color:#bdbdbd;letter-spacing:-0.039px">AssetBundle</div>
<div class="a dd" style="left:621px;top:541px;width:372px;height:18px"></div>
<div class="t" style="left:624.95px;top:542.6px;color:#e4e4e4;letter-spacing:0.07px">None</div>
<svg style="left:979px;top:548px" width="8" height="5"><path d="M0 0 H7.8 L3.9 4.5 Z" fill="#c8c8c8"/></svg>
<div class="a dd" style="left:998px;top:541px;width:111px;height:18px"></div>
<div class="t" style="left:1001.85px;top:542.6px;color:#e4e4e4;letter-spacing:0.103px">None</div>
<svg style="left:1095.1px;top:548px" width="8" height="5"><path d="M0 0 H7.8 L3.9 4.5 Z" fill="#c8c8c8"/></svg>
<div class="a" style="left:1112px;top:0px;width:1px;height:22px;background:#a9b5a6;"></div>
<div class="a" style="left:1112px;top:22px;width:1px;height:540px;background:#c6c6c6;"></div>
</body></html>
